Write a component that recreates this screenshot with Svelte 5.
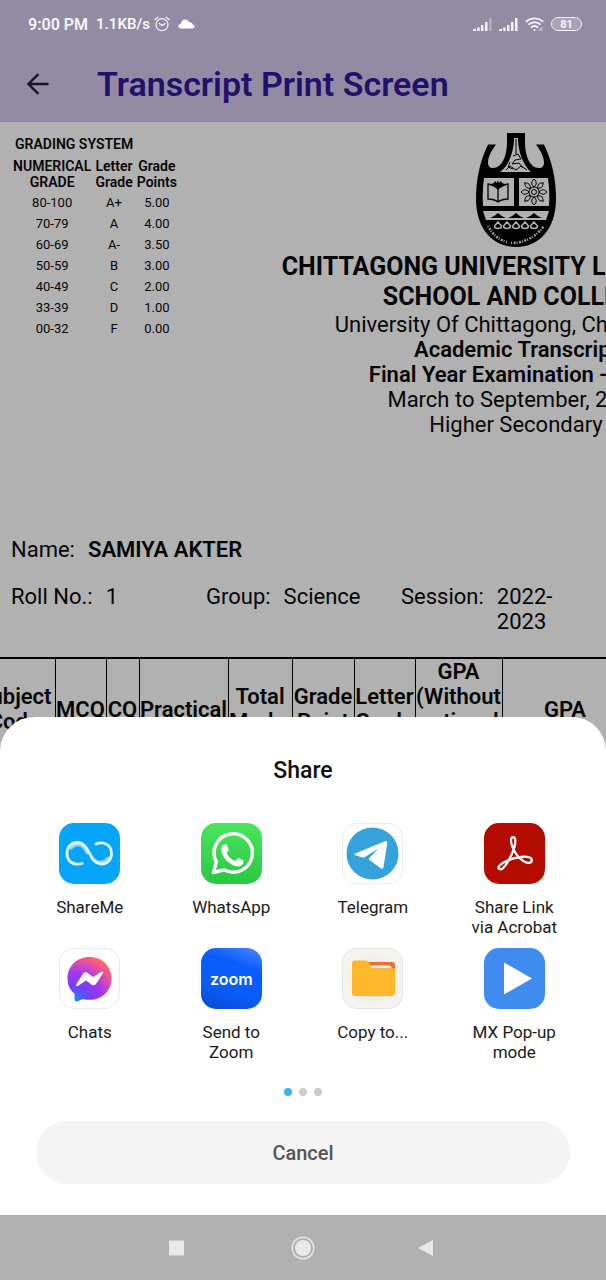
<script>
  const grades = [
    ['80-100', 'A+', '5.00'],
    ['70-79', 'A', '4.00'],
    ['60-69', 'A-', '3.50'],
    ['50-59', 'B', '3.00'],
    ['40-49', 'C', '2.00'],
    ['33-39', 'D', '1.00'],
    ['00-32', 'F', '0.00']
  ];

  const columns = [
    { label: 'Subject Code', width: 81 },
    { label: 'MCQ', width: 51 },
    { label: 'CQ', width: 33 },
    { label: 'Practical', width: 89 },
    { label: 'Total Marks', width: 64 },
    { label: 'Grade Point', width: 62 },
    { label: 'Letter Grade', width: 61 },
    { label: 'GPA (Without optional subject)', width: 87 },
    { label: 'GPA', width: 126 }
  ];

  const apps = [
    { id: 'shareme', label: 'ShareMe' },
    { id: 'whatsapp', label: 'WhatsApp' },
    { id: 'telegram', label: 'Telegram' },
    { id: 'acrobat', label: 'Share Link via Acrobat' },
    { id: 'chats', label: 'Chats' },
    { id: 'zoom', label: 'Send to Zoom' },
    { id: 'copy', label: 'Copy to...' },
    { id: 'mx', label: 'MX Pop-up mode' }
  ];

  const petals = [0, 45, 90, 135, 180, 225, 270, 315];
  let page = $state(0);
</script>

<div class="screen">
  <header>
    <div class="status">
      <span>9:00 PM</span>
      <span class="speed">1.1KB/s</span>
      <svg class="alarm" width="16" height="16" viewBox="0 0 16 16" fill="none" stroke="#f3f0f8" stroke-width="1.3">
        <circle cx="8" cy="8.6" r="6" />
        <path d="M5.3 7.4 8 9.4l3-1.8M1 3.6 4 1.2M15 3.6 12 1.2" stroke-linecap="round" />
      </svg>
      <svg class="cloud" width="17" height="10" viewBox="0 0 17 10" fill="#fff">
        <path d="M3 9.5C1.200 9.500.400 8.600.400 7.300c0-1.400 1-2.200 2.500-2.300C3.200 2.300 5 .5 7.300.5c1.900 0 3.300 1 4 2.900 2-.3 3.100.7 3.300 2.200 1.300.2 2 .9 2 2 0 1.200-.9 1.900-2.200 1.900z" />
      </svg>
      <div class="indicators">
        {#each [0.35, 1] as last}
          <svg width="19" height="14" viewBox="0 0 19 14" fill="#f3f0f8">
            <path d="M0 14v-1.500L3 11.500V14zM4.200 10.500h2.500V14H4.200zM8 8h2.500v6H8zM12 5h2.500v9H12z" />
            <path d="M16 1h2.500v13H16z" opacity={last} />
          </svg>
        {/each}
        <svg width="19" height="15" viewBox="0 0 19 15" fill="none" stroke="#f3f0f8" stroke-width="1.900">
          <path d="M.8 4.700c5-4.500 12.400-4.500 17.400 0M3.300 7.600c3.600-3.200 8.800-3.200 12.400 0M5.900 10.400c2.200-1.800 5-1.800 7.200 0" />
          <circle cx="9.500" cy="13" r="1.100" fill="#f3f0f8" stroke="none" />
          <path d="M14 13.600l3-3.200M16 14l1.500-1.500" stroke-width="1" />
        </svg>
        <span class="battery">81</span>
      </div>
    </div>
    <div class="bar">
      <button class="back" aria-label="Back">
        <svg width="22" height="22" viewBox="0 0 22 22" fill="none" stroke="#1b161f" stroke-width="2.400">
          <path d="M21.500 11H2M11.300 1.200 1.500 11l9.800 9.800" />
        </svg>
      </button>
      <h1>Transcript Print Screen</h1>
    </div>
  </header>

  <main>
    <div class="sheet">
      <section class="top">
        <table class="grading">
          <caption>GRADING SYSTEM</caption>
          <thead>
            <tr><th>NUMERICAL GRADE</th><th>Letter Grade</th><th>Grade Points</th></tr>
          </thead>
          <tbody>
            {#each grades as row}
              <tr>{#each row as cell}<td>{cell}</td>{/each}</tr>
            {/each}
          </tbody>
        </table>
        <div class="heading">
          <svg width="80" height="114" viewBox="0 0 80 114">
            <path
              d="M31 0h18v9c0 14 5 26 14 26 8 0 6-12-3-23.500h8C76 28 80 46 80 66c0 30-17 48-40 48S0 96 0 66c0-20 4-38 12-54.500h8C11 23 9 35 17 35c9 0 14-12 14-26z"
              fill="#000"
            />
            <path d="M38 5h4c0 15 6 28 13 34H24c8-6 14-19 14-34z" fill="#b1b1b1" />
            <path d="M8 45h30v28H7Q6 59 8 45zM43 45h29q2 14 1 28H43zM7 78h66l-3 9H10z" fill="#b1b1b1" />
            <path d="M40 6v15M37 23l5-2 3 5-6 1-3 4 7-1 4 5M34 29l-2 5 5 2M30 37l4-4 6 4 5-4 6 4" fill="none" stroke="#000" stroke-width="1" />
            <path d="M12 51q6 1 10 5 4-4 10-5v15q-6 0-10 3-4-3-10-3zM22 56v13" fill="none" stroke="#000" stroke-width="1.300" />
            <path d="M15 51l3-1 1-2 2 2 1-3 1 3 2-2 1 2 3 1-7 4z" fill="#000" />
            <g fill="none" stroke="#000" stroke-width="1">
              {#each petals as angle}
                <path d="M58 54c-3-3-3-5 0-8 3 3 3 5 0 8z" transform="rotate({angle} 58 59)" />
              {/each}
              <circle cx="58" cy="59" r="5" />
              <circle cx="58" cy="59" r="2.500" />
            </g>
            <path d="M14 85q5-2 8-5 3 3 8 5zM32 85q5-2 8-5 3 3 8 5zM50 85q5-2 8-5 3 3 8 5z" fill="#000" />
            <path
              d="M22 89l3.500 4q0 2.500-3.500 2.500T18.500 93zM31 89l3.500 4q0 2.500-3.500 2.500T27.500 93zM40 89l3.500 4q0 2.500-3.500 2.500T36.500 93zM49 89l3.500 4q0 2.500-3.500 2.500T45.500 93zM58 89l3.500 4q0 2.500-3.500 2.500T54.500 93z"
              fill="none" stroke="#b1b1b1" stroke-width="1.500"
            />
            <path d="M12 93q7 13 19 16M35 110q20 0 33-17" fill="none" stroke="#a0a0a0" stroke-width="2.500" stroke-dasharray="1 1.500 2 1" />
          </svg>
          <h2>CHITTAGONG UNIVERSITY LABORATORY<br />SCHOOL AND COLLEGE</h2>
          <p>University Of Chittagong, Chattogram</p>
          <p><b>Academic Transcript</b></p>
          <p><b>Final Year Examination - 2023</b></p>
          <p>March to September, 2023</p>
          <p>Higher Secondary</p>
        </div>
      </section>

      <dl class="name"><div><dt>Name:</dt><dd><b>SAMIYA AKTER</b></dd></div></dl>
      <dl class="facts">
        <div><dt>Roll No.:</dt><dd>1</dd></div>
        <div><dt>Group:</dt><dd>Science</dd></div>
        <div><dt>Session:</dt><dd>2022-2023</dd></div>
      </dl>

      <table class="marks">
        <colgroup>
          {#each columns as c}<col style="width: {c.width}px" />{/each}
        </colgroup>
        <thead>
          <tr>{#each columns as c}<th>{c.label}</th>{/each}</tr>
        </thead>
      </table>
    </div>
  </main>

  <section class="share" aria-labelledby="share-title">
    <h2 id="share-title">Share</h2>
    <div class="apps">
      {#each apps as app}
        <button class="app">
          <span class="icon {app.id}">
            {#if app.id === 'shareme'}
              <svg viewBox="0 0 61 61" fill="none" stroke-linecap="round">
                <path d="M12 25c7-7 13-2 16 5M33 35c4 5 11 6 16 0" stroke="#8bd5fb" stroke-width="3" />
                <path d="M23 40.500C14 43 8 38 8 30.500c0-6.500 4.500-11 10.500-11 12.500 0 11.500 21.500 24 21.500 6 0 10-4.500 10-10.500 0-8-7.500-13-15.500-9.500" stroke="#e2f7ff" stroke-width="2.800" />
              </svg>
            {:else if app.id === 'whatsapp'}
              <svg viewBox="0 0 61 61">
                <path d="M12.500 49.500 15.300 39A19.200 19.200 0 1 1 23 46.800z" fill="none" stroke="#fff" stroke-width="3.500" stroke-linejoin="round" />
                <path d="M24.300 21.300c.900 0 1.400.4 1.800 1.300l1.400 3.500c.4 1-.1 1.800-1.900 3.900 2 4 4.800 6.400 8.800 8 1.800-2.300 2.600-3.200 3.600-2.700l3.800 1.900c.9.500 1 1 .8 2-.7 3-3.800 4.500-6.500 4.200C28.500 42.300 20.500 34 20.300 27c0-2.700 1.500-5.700 4-5.700z" fill="#fff" />
              </svg>
            {:else if app.id === 'telegram'}
              <svg viewBox="0 0 61 61">
                <circle cx="30.500" cy="30.500" r="26" fill="#34a3dc" />
                <path d="M13 30.500 43 18.300c1.500-.6 2.600.3 2.200 2.200L41.500 44c-.3 1.700-1.400 2.100-2.800 1.200l-11-8c-1-.8-1-1.600-.1-2.500l9-9.200L23 34c-1 .6-1.700.7-2.700.4l-7-2.200c-1.300-.5-1.300-1.200-.3-1.700z" fill="#fff" />
              </svg>
            {:else if app.id === 'acrobat'}
              <svg viewBox="0 0 61 61" fill="none" stroke="#fff" stroke-width="2.300">
                <path d="M29.300 14.200c-3 0-2.800 4.400-1.300 8.500 2.700 7.500 7.500 13.500 12.500 16 4 2 7.300 1.400 7.300-1.500 0-3-5-4-11-3.200-6.500.8-13.500 3.200-18 6-4 2.400-5.200 4.600-3.700 5.900 2 1.600 6-1.800 9.500-8.400 3.300-6 6.100-12.500 6.600-17.300.3-3.700 0-6-1.900-6z" />
              </svg>
            {:else if app.id === 'chats'}
              <svg viewBox="0 0 61 61">
                <defs>
                  <radialGradient id="bubble" cx="0.150" cy="1" r="1.100">
                    <stop offset="0" stop-color="#0795ff" />
                    <stop offset="0.300" stop-color="#7140fb" />
                    <stop offset="0.600" stop-color="#a737ef" />
                    <stop offset="0.920" stop-color="#fb5a82" />
                    <stop offset="1" stop-color="#ff6968" />
                  </radialGradient>
                </defs>
                <path d="M30.500 9C17.500 9 8.500 18.500 8.500 30.500c0 6.500 2.600 11.500 7 15.300V51c0 2 1.200 3 3 2.200l5.500-2.300c2 .6 4.200.9 6.500.9 13 0 22-9 22-21.300S43.500 9 30.500 9z" fill="url(#bubble)" />
                <path d="m17.500 36 6.300-10c1.200-1.900 3.300-2.200 5-.9l4.500 3.500c.5.400 1 .4 1.500 0l7.500-4.800c1.300-.8 2.300.3 1.500 1.700l-6.500 10c-1.200 1.900-3.200 2.200-5 .9l-4.500-3.500c-.5-.4-1-.4-1.500 0L19 38c-1.500 1-2.400-.6-1.500-2z" fill="#fff" />
              </svg>
            {:else if app.id === 'zoom'}
              <span>zoom</span>
            {:else if app.id === 'copy'}
              <svg viewBox="0 0 61 61">
                <path d="M26 14h24q3 0 3 3v10H26z" fill="#e8713a" />
                <path d="M28 17.500h19q2.500 0 2.500 3H28z" fill="#fff4df" />
                <path d="M12.500 12.500H24q1.500 0 2.200 1.200l3.300 5.800q.5.900 1.500.9H53V45q0 3-3 3H13q-3 0-3-3V15q0-2.500 2.500-2.500z" fill="#feb92a" />
              </svg>
            {:else}
              <svg viewBox="0 0 61 61"><path d="M20 14.500v32l28-16z" fill="#fff" /></svg>
            {/if}
          </span>
          <span class="label">{app.label}</span>
        </button>
      {/each}
    </div>
    <div class="dots">
      {#each [0, 1, 2] as i}
        <button class:on={page === i} aria-label="Page {i + 1}" onclick={() => (page = i)}></button>
      {/each}
    </div>
    <button class="cancel">Cancel</button>
  </section>

  <nav>
    <button aria-label="Recent apps">
      <svg width="24" height="24" viewBox="0 0 24 24"><path d="M2 4.500h15v15H2z" fill="#e9e9e9" /></svg>
    </button>
    <button aria-label="Home">
      <svg width="24" height="24" viewBox="0 0 24 24">
        <circle cx="12" cy="12" r="10.800" fill="none" stroke="#e3e3e3" stroke-width="1.500" />
        <circle cx="12" cy="12" r="8" fill="#e9e9e9" />
      </svg>
    </button>
    <button aria-label="Back">
      <svg width="24" height="24" viewBox="0 0 24 24"><path d="M18 4v16L3 12z" fill="#e9e9e9" /></svg>
    </button>
  </nav>
</div>

<style>
  :global(body) {
    margin: 0;
    font-family: Roboto, "Liberation Sans", sans-serif;
  }
  h1, h2, p, dl, dd { margin: 0; }
  b { font-weight: 600; }
  button {
    border: 0;
    padding: 0;
    background: none;
    font: inherit;
    color: inherit;
    cursor: pointer;
  }
  svg { display: block; flex: none; }
  .screen {
    display: flex;
    flex-direction: column;
    height: 100vh;
    background: #b1b1b1;
    overflow: hidden;
  }
  header {
    flex: none;
    background: #938aa3;
    border-bottom: 2px solid #aeacb8;
  }
  .status {
    display: flex;
    align-items: center;
    height: 48px;
    padding: 0 24px 0 28px;
    font-size: 16px;
    font-weight: 600;
    color: #f7f5fa;
  }
  .speed {
    margin-left: 8px;
    font-size: 15px;
  }
  .alarm { margin-left: 4px; }
  .cloud { margin-left: 8px; }
  .indicators {
    display: flex;
    align-items: center;
    gap: 7px;
    margin-left: auto;
  }
  .battery {
    width: 29px;
    height: 12px;
    border: 1px solid #f3f0f8;
    border-radius: 7px;
    background: #aaa2b7;
    font-size: 11px;
    font-weight: 700;
    line-height: 13px;
    text-align: center;
  }
  .bar {
    display: flex;
    align-items: center;
    gap: 48px;
    height: 72px;
    padding: 0 27px 2px;
    box-sizing: content-box;
  }
  .bar {
    height: 72px;
  }
  h1 {
    font-size: 34px;
    font-weight: 600;
    line-height: 40px;
    color: #22116a;
    white-space: nowrap;
  }
  main {
    flex: 1;
    min-height: 0;
    overflow: hidden;
    color: #060606;
  }
  .sheet {
    width: 1032px;
    font-size: 22px;
    line-height: 25px;
  }
  .top {
    display: grid;
    grid-template-columns: 1fr auto 1fr;
    align-items: start;
    min-height: 413px;
    padding-top: 9px;
    box-sizing: border-box;
  }
  .grading {
    justify-self: start;
    width: 168px;
    margin: 3px 0 0 11px;
    border-spacing: 0;
    font-size: 14px;
    line-height: 16px;
    text-align: center;
  }
  .grading caption {
    padding: 0 4px 6px;
    font-weight: 600;
    text-align: left;
  }
  .grading th {
    padding: 0 2px;
    font-weight: 600;
  }
  .grading td {
    padding: 5px 2px 0;
    font-size: 13px;
  }
  .heading {
    text-align: center;
    white-space: nowrap;
  }
  .heading svg { margin: 0 auto 5px; }
  .heading h2 {
    font-size: 25px;
    font-weight: 700;
    line-height: 30px;
  }
  dl div {
    display: flex;
    gap: 13px;
  }
  dt { white-space: nowrap; }
  .name, .facts { padding-left: 11px; }
  .name { margin-bottom: 22px; }
  .facts {
    display: grid;
    grid-template-columns: repeat(3, 195px);
    margin-bottom: 23px;
  }
  .marks {
    table-layout: fixed;
    width: 654px;
    margin-left: -26px;
    border-collapse: collapse;
    border-top: 2px solid #000;
  }
  .marks th {
    padding: 0;
    border-right: 1px solid #000;
    font-weight: 600;
  }
  .share {
    flex: none;
    margin-top: -32px;
    padding: 39px 0 31px;
    border-radius: 34px 34px 0 0;
    background: #fff;
    z-index: 1;
  }
  .share h2 {
    font-size: 23px;
    font-weight: 500;
    line-height: 30px;
    text-align: center;
    color: #111;
  }
  .apps {
    display: grid;
    grid-template-columns: repeat(4, 1fr);
    row-gap: 11px;
    margin-top: 37px;
    padding: 0 21px 0 19px;
  }
  .app {
    display: flex;
    flex-direction: column;
    align-items: center;
    gap: 13px;
  }
  .icon {
    display: grid;
    place-items: center;
    width: 61px;
    height: 61px;
    border-radius: 15px;
    overflow: hidden;
  }
  .icon svg { width: 61px; height: 61px; }
  .shareme { background: #05a5f9; }
  .whatsapp { background: linear-gradient(#4be45f, #29c942); }
  .telegram, .chats { box-shadow: inset 0 0 0 1px #ececec; }
  .acrobat { background: #b30b00; }
  .zoom {
    background: linear-gradient(200deg, #4c88fb, #0b5cff 30%, #0b5cf8 65%, #084bcf);
    color: #fff;
    font-family: Inter, sans-serif;
    font-size: 16px;
    font-weight: 600;
  }
  .copy {
    background: radial-gradient(#eedfc4, #f6f4f1 65%);
    box-shadow: inset 0 0 0 1px #e5e5e5;
  }
  .mx { background: #3f8bee; }
  .label {
    max-width: 96px;
    font-size: 17px;
    line-height: 20px;
    color: #1a1a1a;
  }
  .dots {
    display: flex;
    justify-content: center;
    gap: 7px;
    margin-top: 26px;
  }
  .dots button {
    width: 8px;
    height: 8px;
    border-radius: 50%;
    background: #cbcbcb;
  }
  .dots .on { background: #3eb0ea; }
  .cancel {
    display: block;
    width: calc(100% - 72px);
    height: 63px;
    margin: 25px 36px 0;
    border-radius: 32px;
    background: #f4f4f4;
    font-size: 20px;
    font-weight: 500;
    color: #555;
  }
  nav {
    flex: none;
    display: flex;
    justify-content: center;
    align-items: center;
    gap: 100px;
    height: 65px;
    background: #b1b1b1;
  }
  nav button { width: 24px; height: 24px; }
</style>
